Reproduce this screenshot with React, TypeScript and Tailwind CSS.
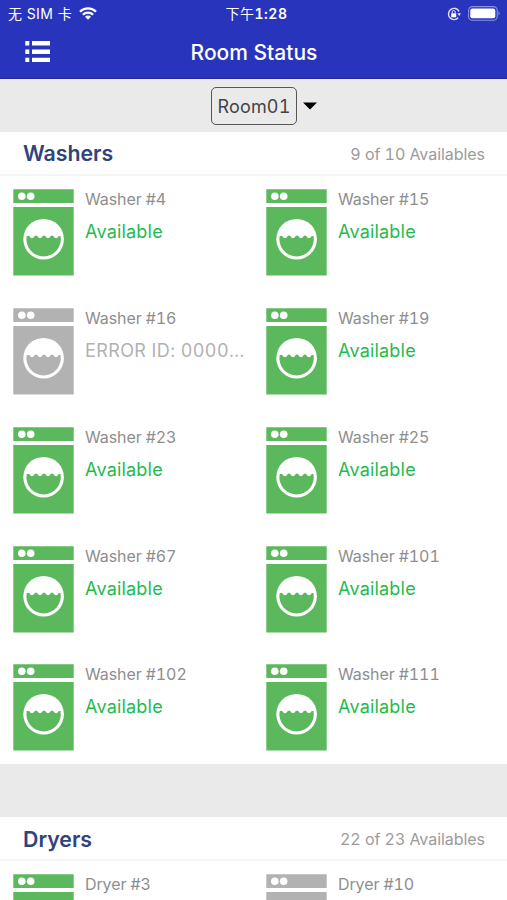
type Machine = { name: string; status: string; ok: boolean };

const washers: Machine[] = [
  { name: 'Washer #4', status: 'Available', ok: true },
  { name: 'Washer #15', status: 'Available', ok: true },
  { name: 'Washer #16', status: 'ERROR ID: 0000...', ok: false },
  { name: 'Washer #19', status: 'Available', ok: true },
  { name: 'Washer #23', status: 'Available', ok: true },
  { name: 'Washer #25', status: 'Available', ok: true },
  { name: 'Washer #67', status: 'Available', ok: true },
  { name: 'Washer #101', status: 'Available', ok: true },
  { name: 'Washer #102', status: 'Available', ok: true },
  { name: 'Washer #111', status: 'Available', ok: true },
];

const dryers: Machine[] = [
  { name: 'Dryer #3', status: '', ok: true },
  { name: 'Dryer #10', status: '', ok: false },
];

function MachineIcon({ ok }: { ok: boolean }) {
  return (
    <svg
      width="61"
      height="87"
      viewBox="0 0 61 87"
      className={ok ? 'shrink-0 text-[#5cb85c]' : 'shrink-0 text-[#b2b2b2]'}
    >
      <path fill="currentColor" d="M.3.3h60.4v13.6H.3zM.3 18h60.4v68.6H.3z" />
      <circle cx="8.8" cy="7.2" r="3.8" fill="#fff" />
      <circle cx="17.7" cy="7.2" r="3.8" fill="#fff" />
      <circle cx="30.6" cy="50.2" r="20.3" fill="#fff" />
      <path
        fill="currentColor"
        d="M13.7 47h2.500q2.800 4.400 5.600 0q1.200-.8 2.400 0q2.800 4.400 5.600 0q1.200-.8 2.400 0q2.800 4.400 5.600 0q1.200-.8 2.400 0q2.800 4.400 5.600 0h1.700A17.200 17.200 0 1 1 13.700 47z"
      />
    </svg>
  );
}

function MachineCell({ machine }: { machine: Machine }) {
  return (
    <div className="flex h-[118.75px] min-w-0 items-start gap-[11px] pt-[13px] pl-[13px]">
      <MachineIcon ok={machine.ok} />
      <div className="w-[164px] min-w-0">
        <div className="h-5 text-[16px] leading-5 tracking-[-0.1px] text-[#8e8e8e] tabular-nums">{machine.name}</div>
        {machine.status && (
          <div
            className={
              machine.ok
                ? 'mt-[11px] h-6 text-[18px] leading-6 tracking-[0.2px] whitespace-nowrap text-[#1fbb50]'
                : 'mt-[11px] h-6 text-[18px] leading-6 tracking-[0.4px] whitespace-nowrap text-[#b2b2b2] tabular-nums'
            }
          >
            {machine.status}
          </div>
        )}
      </div>
    </div>
  );
}

function Section({ title, summary, machines }: { title: string; summary: string; machines: Machine[] }) {
  return (
    <section className="shrink-0 bg-white">
      <div className="flex h-11 items-center justify-between border-b-2 border-[#f5f5f5] pt-[2px] pr-[22px] pl-[23px]">
        <h2 className="text-[21.3px] font-semibold text-[#30437b]">{title}</h2>
        <span className="text-[16px] tracking-[-0.05px] text-[#9b9b9b] tabular-nums">{summary}</span>
      </div>
      <div className="grid max-h-[588px] grid-cols-[253px_254px] overflow-hidden">
        {machines.map((m) => (
          <MachineCell key={m.name} machine={m} />
        ))}
      </div>
    </section>
  );
}

function StatusBar() {
  return (
    <div className="grid h-[27px] grid-cols-3 items-center pr-[6px] pl-[8px] text-[14px]">
      <div className="flex items-center gap-[7px]">
        <span className="tracking-[0.400px]">无 SIM 卡</span>
        <svg width="18" height="13" viewBox="0 0 18 13" fill="none" stroke="#fff" strokeWidth="2.300">
          <path d="M1 4.700a11.300 11.300 0 0 1 16 0M3.900 7.700a7.200 7.200 0 0 1 10.200 0" />
          <path d="M9 12.700 6 9.700a4.200 4.200 0 0 1 6 0z" fill="#fff" stroke="none" />
        </svg>
      </div>
      <span className="pl-[4px] text-center font-semibold tracking-[0.500px] tabular-nums">
        <span className="font-normal">下午</span>1:28
      </span>
      <div className="flex items-center justify-end gap-[7px]">
        <svg width="14" height="14" viewBox="0 0 14 14" fill="none" stroke="#dfe1ff" strokeWidth="1.400">
          <path d="M11.200 10.800A5.600 5.600 0 1 1 12 4.300" />
          <path d="M10.300 6.200h3.700l-1.800 2.700z" fill="#dfe1ff" stroke="none" />
          <path d="M4.200 6.300h5v4h-5z" fill="#fff" stroke="none" />
          <path d="M5.200 6.500V5a1.500 1.500 0 0 1 3 0v1.500" strokeWidth="1" />
        </svg>
        <svg width="33" height="15" viewBox="0 0 33 15">
          <rect x=".6" y=".6" width="28.600" height="13.600" rx="3.800" fill="none" stroke="#8b91df" strokeWidth="1.100" />
          <rect x="2.300" y="2.500" width="25" height="9.800" rx="2" fill="#fff" />
          <path d="M30.500 5.200q2.400 2.200 0 4.400z" fill="#8b91df" />
        </svg>
      </div>
    </div>
  );
}

export default function App() {
  return (
    <div className="flex h-[900px] w-[507px] flex-col overflow-hidden bg-[#eaeaea] font-['Inter','Noto_Sans_CJK_SC',sans-serif]">
      <header className="h-[79px] shrink-0 border-b border-[#2227a0] bg-[#2834bc] text-white">
        <StatusBar />
        <div className="grid h-[50px] grid-cols-[50px_1fr_49px] items-center">
          <svg width="26" height="22" viewBox="0 0 26 22" fill="#fff" className="ml-[25px]">
            <path d="M.3 0h4v4.400h-4zM7 0h18v4.400H7zM.3 8.500h4v4.400h-4zM7 8.500h18v4.400H7zM.3 16.700h4v4.400h-4zM7 16.700h18v4.400H7z" />
          </svg>
          <h1 className="pt-[2px] text-center text-[21px] font-medium">Room Status</h1>
        </div>
      </header>
      <div className="flex h-[53.300px] shrink-0 items-center justify-center gap-[6px] pl-[21px]">
        <button className="h-[38px] w-[86px] rounded-[5px] border border-[#555] pt-[2px] text-[18px] tracking-[0.200px] text-[#444] tabular-nums">
          Room01
        </button>
        <svg width="14" height="8" viewBox="0 0 14 8">
          <path d="M0 .5h14L7 7.500z" fill="#000" />
        </svg>
      </div>
      <Section title="Washers" summary="9 of 10 Availables" machines={washers} />
      <div className="h-[53.200px] shrink-0" />
      <Section title="Dryers" summary="22 of 23 Availables" machines={dryers} />
    </div>
  );
}
